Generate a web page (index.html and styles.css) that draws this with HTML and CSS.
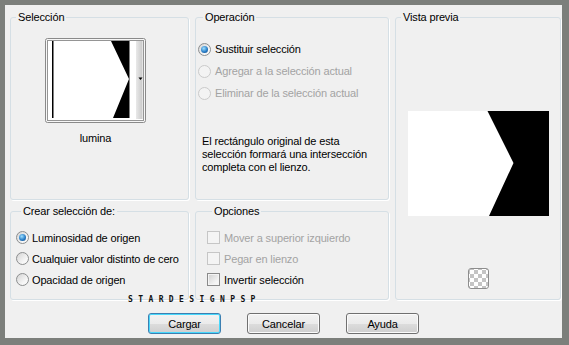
FILE: index.html
```html
<!DOCTYPE html>
<html lang="es">
<head>
  <meta charset="UTF-8" />
  <title>Cargar selección</title>
  <link rel="stylesheet" href="styles.css">
</head>
<body>
  <div class="window">
    <div class="dialog">
      <div class="groups">
        <fieldset class="group sel">
          <legend>Selección</legend>
          <div class="thumb-wrap">
            <svg class="thumb" width="101" height="85" viewBox="0 0 101 85">
              <rect x="0.5" y="0.5" width="100" height="84" rx="2" fill="#f7f7f7" stroke="#8a8a8a"/>
              <rect x="3" y="3" width="95" height="79" fill="#fff"/>
              <rect x="7" y="3" width="1.5" height="77" fill="#000"/>
              <polygon points="66,3 84.5,3 84.5,80 68,80 84,41" fill="#000"/>
              <defs>
                <linearGradient id="sb" x1="0" y1="0" x2="1" y2="0">
                  <stop offset="0" stop-color="#e9e9e9"/>
                  <stop offset="1" stop-color="#c9c9c9"/>
                </linearGradient>
              </defs>
              <rect x="91" y="3" width="6.5" height="78" fill="url(#sb)"/>
              <polygon points="93.5,39.5 97.5,39.5 95.5,42" fill="#000"/>
              <rect x="2.5" y="2.5" width="96" height="80" fill="none" stroke="#333" stroke-dasharray="1 1"/>
            </svg>
            <div class="thumb-name">lumina</div>
          </div>
        </fieldset>

        <fieldset class="group op">
          <legend>Operación</legend>
          <div class="radios">
            <div class="row"><span class="radio on"></span>Sustituir selección</div>
            <div class="row off"><span class="radio"></span>Agregar a la selección actual</div>
            <div class="row off"><span class="radio"></span>Eliminar de la selección actual</div>
          </div>
          <p class="note">El rectángulo original de esta selección formará una intersección completa con el lienzo.</p>
        </fieldset>

        <fieldset class="group preview">
          <legend>Vista previa</legend>
          <svg class="preview-img" width="141" height="105" viewBox="0 0 141 105">
            <rect width="141" height="105" fill="#fff"/>
            <polygon points="79.5,0 141,0 141,105 81,105 105.5,52" fill="#000"/>
          </svg>
          <span class="checker"></span>
        </fieldset>

        <fieldset class="group crear">
          <legend>Crear selección de:</legend>
          <div class="row"><span class="radio on"></span>Luminosidad de origen</div>
          <div class="row"><span class="radio"></span>Cualquier valor distinto de cero</div>
          <div class="row"><span class="radio"></span>Opacidad de origen</div>
        </fieldset>

        <fieldset class="group opts">
          <legend>Opciones</legend>
          <div class="row off"><span class="check"></span>Mover a superior izquierdo</div>
          <div class="row off"><span class="check"></span>Pegar en lienzo</div>
          <div class="row"><span class="check on"></span>Invertir selección</div>
        </fieldset>
      </div>

      <div class="watermark">STARDESIGNPSP</div>

      <div class="actions">
        <button class="btn default">Cargar</button>
        <button class="btn">Cancelar</button>
        <button class="btn">Ayuda</button>
      </div>
    </div>
  </div>
</body>
</html>
```

FILE: styles.css
```css
* { box-sizing: border-box; margin: 0; padding: 0; }
body { font-family: 'Liberation Sans', Arial, sans-serif; font-size: 11px; letter-spacing: -0.15px; color: #000; background: #7c7f7b; }
.window { width: 569px; height: 345px; background: #7c7f7b; padding: 5px 7px 7px 5px; }
.dialog { position: relative; height: 100%; background: #f0f0f0; padding: 6px 0 0 5px; }

.groups { display: grid; grid-template-columns: 179px 194px 166px; grid-template-rows: 189px 95px; column-gap: 6px; row-gap: 5px; }
.group { border: 1px solid #d5dfe5; border-radius: 3px; box-shadow: 1px 1px 0 #fff; min-width: 0; padding: 0; }
.group legend { margin-left: 5px; padding: 0 2px; line-height: 13px; background: #f0f0f0; }
.sel { grid-column: 1; grid-row: 1; }
.op { grid-column: 2; grid-row: 1; padding-left: 2px; }
.preview { grid-column: 3; grid-row: 1 / 3; display: flex; flex-direction: column; align-items: center; }
.crear { grid-column: 1; grid-row: 2; padding: 9px 0 0 5px; }
.opts { grid-column: 2; grid-row: 2; padding: 9px 0 0 11px; }

.thumb-wrap { display: flex; flex-direction: column; align-items: center; padding-right: 8px; }
.thumb { display: block; margin-top: 14px; }
.thumb-name { margin-top: 9px; line-height: 13px; }

.radios { margin-top: 14px; }
.row { display: flex; align-items: center; gap: 4px; height: 21px; white-space: nowrap; }
.radios .row { height: 22px; }
.row.off { color: #a3a3a3; }
.crear .row { gap: 3px; }

.radio { width: 13px; height: 13px; border-radius: 50%; border: 1px solid #8c8e8f; background: linear-gradient(135deg, #d4d4d4, #f7f7f7 70%); display: flex; align-items: center; justify-content: center; flex: none; }
.radio.on::after { content: ""; width: 7px; height: 7px; border-radius: 50%; background: radial-gradient(circle at 40% 35%, #9fe0ff, #2a7fc8 55%, #0d3f7a); }
.row.off .radio { border-color: #cacaca; background: #f3f3f3; }

.check { width: 13px; height: 13px; border: 1px solid #c6c6c6; background: #f4f4f4; flex: none; }
.check.on { border-color: #8a8a8a; background: linear-gradient(135deg, #cfcfcf, #f5f5f5 75%); box-shadow: inset 0 0 0 1px #f4f4f4; }

.note { width: 172px; margin: 31px 0 0 4px; line-height: 13px; }

.preview-img { display: block; margin-top: 87px; }
.checker { display: block; width: 21px; height: 21px; margin-top: 52px; border: 1px solid #8d8d8d; border-radius: 3px;
  background-color: #fff;
  background-image: linear-gradient(45deg, #c4c4c4 25%, transparent 25%, transparent 75%, #c4c4c4 75%), linear-gradient(45deg, #c4c4c4 25%, transparent 25%, transparent 75%, #c4c4c4 75%);
  background-size: 8px 8px; background-position: 1px 1px, 5px 5px; }

.watermark { position: absolute; left: 123px; top: 291px; font-family: 'DejaVu Sans Mono', monospace; font-weight: bold; font-size: 8px; line-height: 8px; letter-spacing: 5.4px; color: #111; }

.actions { display: flex; justify-content: center; gap: 26px; margin-top: 13px; padding-right: 5px; }
.btn { width: 73px; height: 21px; font-family: inherit; font-size: 11px; letter-spacing: inherit; color: #000; border: 1px solid #707070; border-radius: 3px;
  background: linear-gradient(#f2f2f2 0%, #ebebeb 50%, #dddddd 51%, #cfcfcf 100%); box-shadow: inset 0 0 0 1px #fbfbfb; }
.btn.default { border-color: #3c7fb1; box-shadow: inset 0 0 0 1px #48d8fb; }
```
